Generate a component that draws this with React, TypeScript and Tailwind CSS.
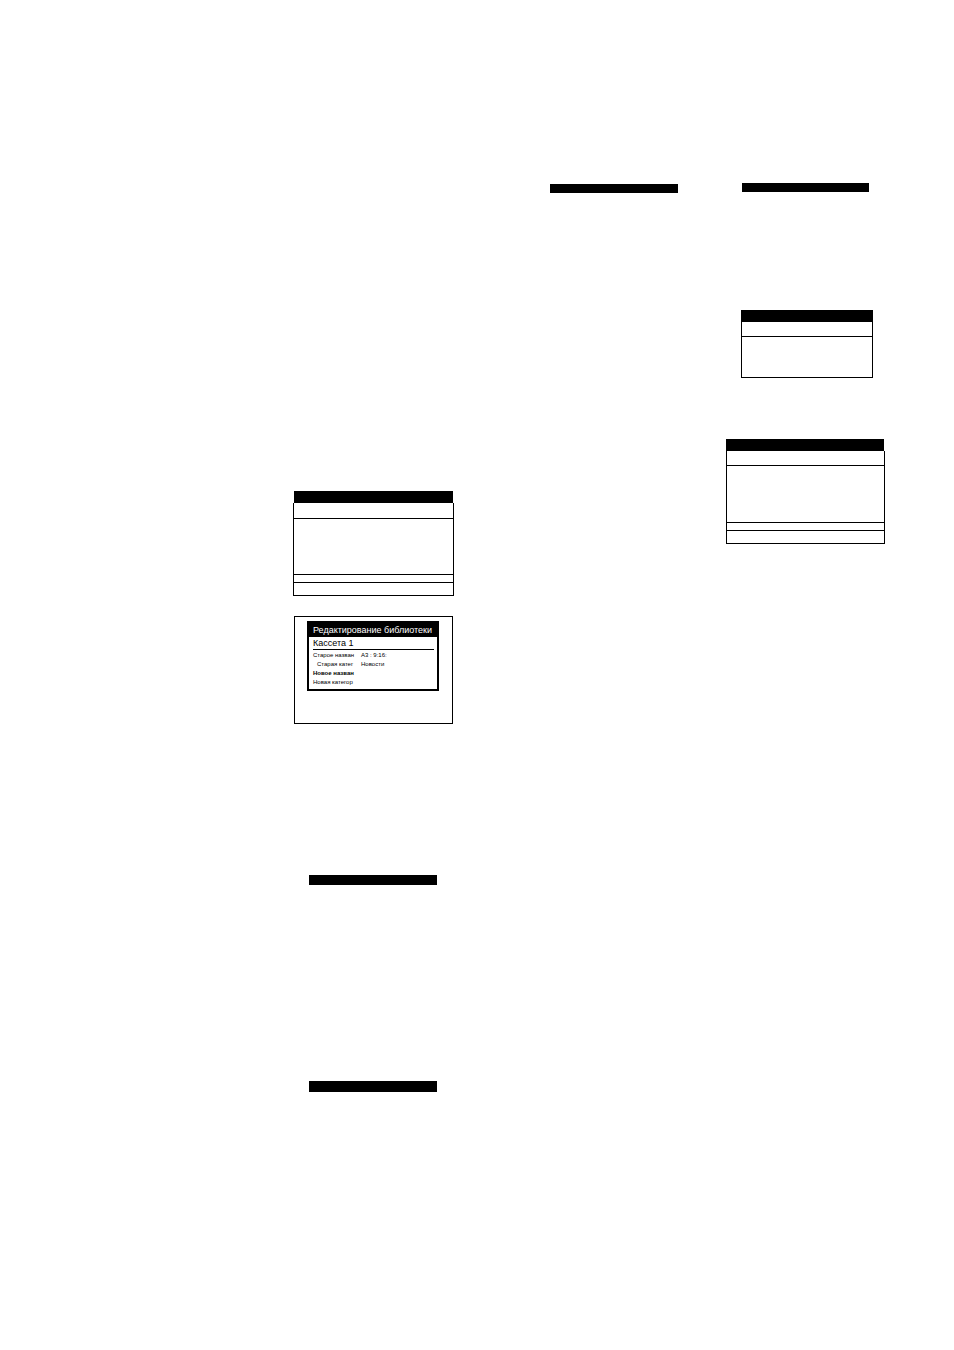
import clsx from 'clsx';

interface LibraryField {
  label: string;
  value?: string;
  active?: boolean;
  indent?: boolean;
}

const FIELDS: LibraryField[] = [
  { label: 'Старое назван', value: 'A3 : 9:16:' },
  { label: 'Старая катег', value: 'Новости', indent: true },
  { label: 'Новое назван', active: true },
  { label: 'Новая категор' },
];

function Bar({ className }: { className?: string }) {
  return <div className={clsx('bg-black', className)} />;
}

interface MenuFrameProps {
  className?: string;
  headClass: string;
  rowClass: string;
  bodyClass: string;
}

// Empty menu frame: title strip, heading row, body, two footer rows
function MenuFrame({ className, headClass, rowClass, bodyClass }: MenuFrameProps) {
  return (
    <section className={className}>
      <div className={clsx('h-3 bg-black', headClass)} />
      <div className="border-x border-b border-black">
        <div className={clsx('border-b border-black', rowClass)} />
        <div className={bodyClass} />
        <div className="h-2 border-t border-black" />
        <div className="h-[13px] border-t border-black" />
      </div>
    </section>
  );
}

function SmallFrame({ className }: { className?: string }) {
  return (
    <section className={clsx('border border-black', className)}>
      <div className="h-[11px] bg-black" />
      <div className="h-[15px] border-b border-black" />
      <div className="h-10" />
    </section>
  );
}

function LibraryEditor() {
  return (
    <section className="mt-5 mr-px ml-px h-[108px] border border-black pt-1 pr-[13px] pl-3">
      <div className="h-[70px] border-2 border-t-0 border-black">
        <h1 className="h-4 bg-black pl-1 text-[9px] leading-[18px] whitespace-nowrap text-white">
          Редактирование библиотеки
        </h1>
        <div className="pr-[3px] pl-1">
          <h2 className="h-[13px] border-b border-black text-[9px] leading-[13px]">Кассета 1</h2>
          <dl className="pt-px">
            {FIELDS.map((field) => (
              <div key={field.label} className="flex h-[9px] text-[6px] leading-[9px] whitespace-nowrap">
                <dt
                  className={clsx(
                    'w-12',
                    field.indent && 'pl-1',
                    field.active && 'font-bold'
                  )}
                >
                  {field.label}
                </dt>
                <dd>{field.value}</dd>
              </div>
            ))}
          </dl>
        </div>
      </div>
    </section>
  );
}

export default function App() {
  return (
    <main
      className="grid w-full grid-cols-[293fr_161fr_96fr_128fr_48fr_159fr_69fr] items-start bg-white pb-64 text-black"
      style={{ fontFamily: '"Liberation Sans", Arial, sans-serif' }}
    >
      <div className="col-start-2 min-w-0 pt-[491px]">
        <MenuFrame headClass="mx-px" rowClass="h-4" bodyClass="h-[55px]" />
        <LibraryEditor />
        <Bar className="mt-[151px] mr-[17px] ml-4 h-[10px]" />
        <Bar className="mt-[196px] mr-[17px] ml-4 h-[11px]" />
      </div>

      <div className="col-start-4 pt-[184px]">
        <Bar className="h-[9px]" />
      </div>

      <div className="col-start-6 pt-[183px]">
        <Bar className="mr-4 ml-4 h-[9px]" />
        <SmallFrame className="mt-[118px] mr-3 ml-[15px]" />
        <MenuFrame className="mt-[61px]" headClass="mr-px" rowClass="h-[15px]" bodyClass="h-14" />
      </div>
    </main>
  );
}
